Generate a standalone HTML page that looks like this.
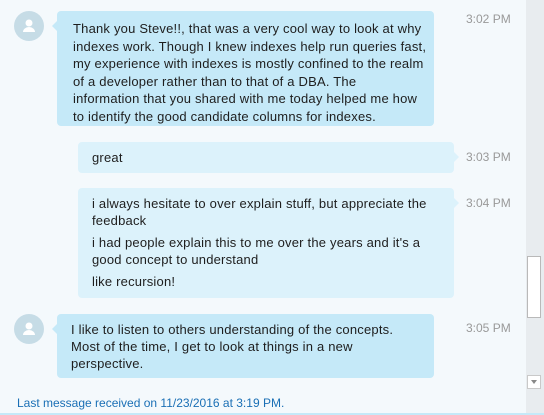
<!DOCTYPE html>
<html><head><style>
body{margin:0;width:544px;height:415px;background:#f4f9fc;font-family:"Liberation Sans",sans-serif;font-size:13px;color:#1e1e1e;position:relative;overflow:hidden}
.b{position:absolute;border-radius:4px;box-sizing:border-box;white-space:nowrap;letter-spacing:0.2px}
.in{background:#c5e9f8}
.out{background:#dcf2fb}
.av{position:absolute;width:30px;height:30px;border-radius:50%;background:#c6dce6}
.t{position:absolute;left:466px;color:#999;font-size:12px}
.tri{position:absolute;width:0;height:0;border-top:5px solid transparent;border-bottom:5px solid transparent}
p{margin:0}
</style></head><body>
<div class="av" style="left:14px;top:11px"><svg width="30" height="30"><circle cx="15" cy="12" r="3.5" fill="#fff"/><path d="M9 21a6 5 0 0 1 12 0z" fill="#fff"/></svg></div>
<div class="tri" style="left:52px;top:21px;border-right:5px solid #c5e9f8"></div>
<div class="b in" style="left:57px;top:11px;width:377px;height:115px;padding:9px 0 0 16px;line-height:17.6px">Thank you Steve!!, that was a very cool way to look at why<br>indexes work. Though I knew indexes help run queries fast,<br>my experience with indexes is mostly confined to the realm<br>of a developer rather than to that of a DBA. The<br>information that you shared with me today helped me how<br>to identify the good candidate columns for indexes.</div>
<div class="t" style="top:12px">3:02 PM</div>

<div class="b out" style="left:78px;top:142px;width:376px;height:31px;padding:7px 0 0 14px;line-height:17px">great</div>
<div class="tri" style="left:454px;top:152px;border-left:5px solid #dcf2fb"></div>
<div class="t" style="top:150px">3:03 PM</div>

<div class="b out" style="left:78px;top:188px;width:376px;height:110px;padding:8px 10px 0 14px;line-height:16.5px">
<p>i always hesitate to over explain stuff, but appreciate the<br>feedback</p>
<p style="margin-top:6px">i had people explain this to me over the years and it's a<br>good concept to understand</p>
<p style="margin-top:6px">like recursion!</p></div>
<div class="tri" style="left:454px;top:198px;border-left:5px solid #dcf2fb"></div>
<div class="t" style="top:196px">3:04 PM</div>

<div class="av" style="left:14px;top:314px"><svg width="30" height="30"><circle cx="15" cy="12" r="3.5" fill="#fff"/><path d="M9 21a6 5 0 0 1 12 0z" fill="#fff"/></svg></div>
<div class="tri" style="left:52px;top:324px;border-right:5px solid #c5e9f8"></div>
<div class="b in" style="left:57px;top:314px;width:377px;height:64px;padding:7px 10px 0 14px;line-height:17px">I like to listen to others understanding of the concepts.<br>Most of the time, I get to look at things in a new<br>perspective.</div>
<div class="t" style="top:321px">3:05 PM</div>

<div style="position:absolute;left:17px;top:396px;color:#1a6fb5;font-size:12px">Last message received on 11/23/2016 at 3:19 PM.</div>
<div style="position:absolute;left:0;top:413px;width:544px;height:2px;background:#c5e9f8"></div>

<div style="position:absolute;left:526px;top:0;width:18px;height:413px;background:#e8ecef"></div>
<div style="position:absolute;left:527px;top:256px;width:14px;height:62px;background:#fff;border:1px solid #b9b9b9;box-sizing:border-box"></div>
<div style="position:absolute;left:527px;top:375px;width:14px;height:14px;background:#fff;border:1px solid #c9c9c9;box-sizing:border-box"></div>
<div class="tri" style="left:531px;top:380px;border:3px solid transparent;border-top:4px solid #888;border-bottom:0"></div>
</body></html>
